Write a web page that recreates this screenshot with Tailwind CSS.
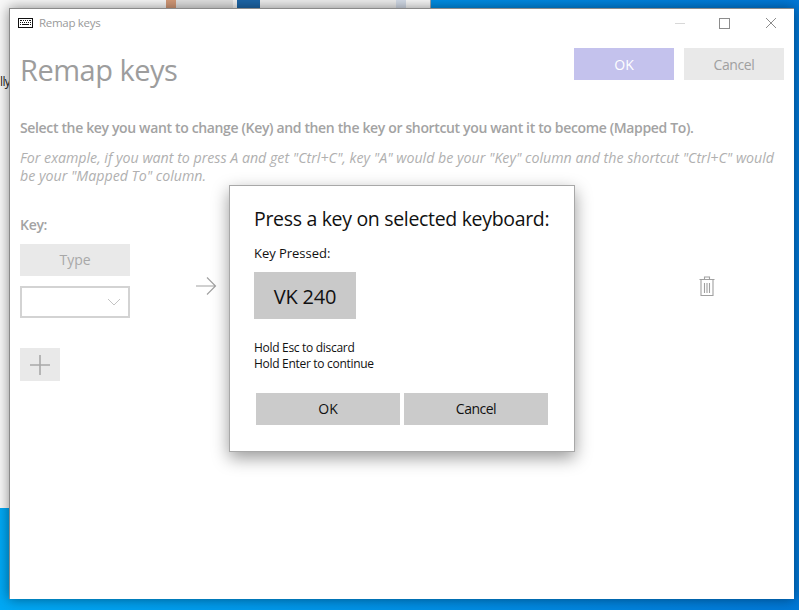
<!DOCTYPE html>
<html><head><meta charset="utf-8"><title>Remap keys</title>
<script src="https://cdn.jsdelivr.net/npm/@tailwindcss/browser@4"></script></head>
<body class="m-0 overflow-hidden">
<div class="relative w-[799px] h-[610px] overflow-hidden bg-gradient-to-r from-[#00a8f4] to-[#0078d7] font-['Open_Sans','Noto_Sans',sans-serif]">
  <!-- window behind -->
  <div class="absolute left-0 top-0 w-[431px] h-[508px] bg-[#f8f8f8] border-r border-[#a0a8b0]">
    <div class="flex h-[8px]">
      <div class="ml-[166px] w-[10px] bg-[#d49a78]"></div>
      <div class="w-[57px] bg-[#e2e2e2]"></div>
      <div class="w-[4px] bg-[#f4f4f4]"></div>
      <div class="w-[23px] bg-[#1d66a8]"></div>
      <div class="w-[136px] bg-[#efefef]"></div>
      <div class="w-[10px] bg-[#d4dce8]"></div>
    </div>
    <div class="absolute left-0 top-[74px] text-[12px] leading-4 tracking-[-0.6px] text-[#222]">lly</div>
  </div>
  <!-- main window -->
  <div class="absolute left-[9px] top-[8px] w-[785px] h-[591px] bg-white border-t border-l border-[#8a8a8a] shadow-[0_0_12px_rgba(0,0,0,0.45)] box-border flex flex-col">
    <div class="h-[28px] flex items-center pl-[8px] shrink-0 relative">
      <svg width="15" height="10" viewBox="0 0 15 10" class="shrink-0" shape-rendering="crispEdges">
        <rect x="0.5" y="0.5" width="14" height="8.5" fill="#fff" stroke="#111"/>
        <path d="M2 2h2v1H2zM5 2h1v1H5zM7 2h1v1H7zM9 2h1v1H9zM11 2h2v1h-2zM2 4h1v1H2zM4 4h1v1H4zM6 4h1v1H6zM8 4h1v1H8zM10 4h1v1h-1zM12 4h1v1h-1zM2 6h1v1H2zM4 6h7v1H4zM12 6h1v1h-1z" fill="#111"/>
      </svg>
      <span class="ml-[6px] text-[11.5px] tracking-[-0.3px] text-[#9a9a9a]">Remap keys</span>
      <div class="absolute right-0 top-0 h-[28px] flex items-center text-[#8c8c8c]">
        <svg width="12" height="12" viewBox="0 0 12 12" class="mr-[33px]"><path d="M1 6.5h10" stroke="#d8d8d8" stroke-width="1"/></svg>
        <svg width="11" height="11" viewBox="0 0 11 11" class="mr-[35px]"><rect x="0.5" y="0.5" width="10" height="10" fill="none" stroke="#8c8c8c"/></svg>
        <svg width="12" height="12" viewBox="0 0 12 12" class="mr-[17px]"><path d="M1 1l10 10M11 1L1 11" stroke="#8c8c8c" stroke-width="1"/></svg>
      </div>
    </div>
    <div class="pl-[10px] pr-[9px] flex-1 flex flex-col">
      <div class="flex justify-between items-start h-[40px] mt-[3px]">
        <h1 class="text-[29px] leading-[40px] tracking-[-0.5px] text-[#9d9d9d] font-normal mt-[10px]">Remap keys</h1>
        <div class="flex gap-[10px] mt-[8px] mr-[1px]">
          <div class="w-[100px] h-[32px] bg-[#c4c2ed] text-white text-[14px] flex items-center justify-center">OK</div>
          <div class="w-[100px] h-[32px] bg-[#e9e9e9] text-[#a0a0a0] text-[14px] tracking-[-0.4px] flex items-center justify-center">Cancel</div>
        </div>
      </div>
      <p class="mt-[38px] text-[14px] leading-[20px] tracking-[-0.35px] font-semibold text-[#a3a3a3]">Select the key you want to change (Key) and then the key or shortcut you want it to become (Mapped To).</p>
      <p class="mt-[11px] w-[770px] text-[14.2px] leading-[18px] tracking-[0px] italic text-[#b0b0b0]">For example, if you want to press A and get "Ctrl+C", key "A" would be your "Key" column and the shortcut "Ctrl+C" would be your "Mapped To" column.</p>
      <div class="mt-[30px] text-[14px] leading-[20px] tracking-[-0.3px] font-semibold text-[#a3a3a3]">Key:</div>
      <div class="flex items-start mt-[9px]">
        <div class="w-[110px] flex flex-col gap-[10px]">
          <div class="h-[32px] pb-[2px] bg-[#e9e9e9] text-[#a8a8a8] text-[14px] flex items-center justify-center">Type</div>
          <div class="h-[32px] border-2 border-[#d3d3d3] flex items-center justify-end pr-[7px]">
            <svg width="14" height="8" viewBox="0 0 14 8"><path d="M1 1l6 6 6-6" fill="none" stroke="#c4c4c4"/></svg>
          </div>
        </div>
        <svg width="22" height="20" viewBox="0 0 22 20" class="ml-[65px] mt-[32px]"><path d="M1 10h19M12 1.5l8.5 8.5-8.5 8.5" fill="none" stroke="#a2a2a2" stroke-width="1.2"/></svg>
        <svg width="16" height="20" viewBox="0 0 16 20" class="ml-[482px] mt-[32px]"><path d="M0.5 3.5h15M5.5 3V1h5v2M2 4v15.5h12V4M5.5 7v10M8 7v10M10.5 7v10" fill="none" stroke="#a0a0a0" stroke-width="1.1"/></svg>
      </div>
      <div class="mt-[30px] w-[40px] h-[33px] bg-[#e9e9e9] flex items-center justify-center">
        <svg width="20" height="20" viewBox="0 0 20 20"><path d="M0 10h20M10 0v20" stroke="#a8a8a8" stroke-width="1.6"/></svg>
      </div>
    </div>
  </div>
  <!-- dialog -->
  <div class="absolute left-[229px] top-[185px] w-[346px] h-[267px] bg-white border border-[#a8a8a8] shadow-[0_6px_16px_rgba(0,0,0,0.4)] box-border pl-[24px] flex flex-col text-[#111]">
    <div class="mt-[19px] text-[19.5px] leading-[28px] tracking-[-0.32px]">Press a key on selected keyboard:</div>
    <div class="mt-[11px] text-[13px] leading-[18px] tracking-[-0.03px]">Key Pressed:</div>
    <div class="mt-[10px] w-[102px] h-[47px] pt-[2px] bg-[#c9c9c9] text-[20px] tracking-[-0.2px] flex items-center justify-center">VK 240</div>
    <div class="mt-[21px] text-[12px] leading-[16px] tracking-[-0.3px]">Hold Esc to discard<br>Hold Enter to continue</div>
    <div class="mt-[21px] ml-[2px] flex gap-[4px]">
      <div class="w-[144px] h-[32px] pb-[2px] bg-[#cbcbcb] text-[14px] flex items-center justify-center">OK</div>
      <div class="w-[144px] h-[32px] pb-[2px] bg-[#cbcbcb] text-[14px] tracking-[-0.5px] flex items-center justify-center">Cancel</div>
    </div>
  </div>
</div>
</body></html>
